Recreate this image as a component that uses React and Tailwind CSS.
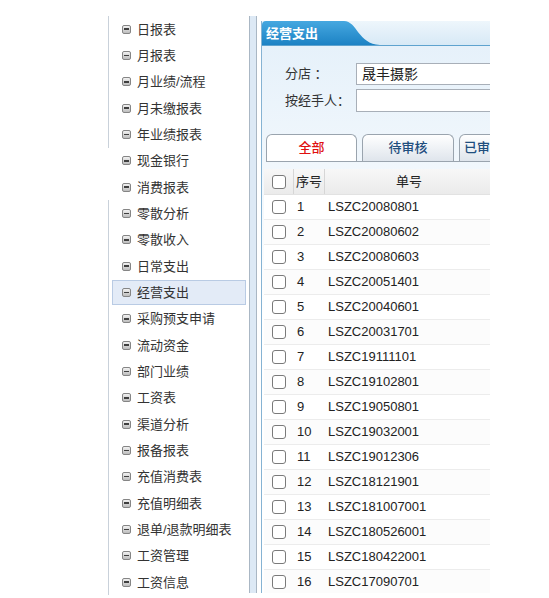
import React from "react";

const menu = [
  "日报表", "月报表", "月业绩/流程", "月未缴报表", "年业绩报表",
  "现金银行", "消费报表",
  "零散分析", "零散收入", "日常支出", "经营支出", "采购预支申请", "流动资金", "部门业绩", "工资表", "渠道分析", "报备报表", "充值消费表", "充值明细表", "退单/退款明细表", "工资管理", "工资信息",
];

const rows = [
  "LSZC20080801", "LSZC20080602", "LSZC20080603", "LSZC20051401", "LSZC20040601", "LSZC20031701",
  "LSZC19111101", "LSZC19102801", "LSZC19050801", "LSZC19032001", "LSZC19012306", "LSZC18121901",
  "LSZC181007001", "LSZC180526001", "LSZC180422001", "LSZC17090701",
];

const font = { fontFamily: '"Liberation Sans", "Noto Sans CJK SC", sans-serif' };

function MinusIcon() {
  return (
    <span className="flex h-[9px] w-[9px] shrink-0 items-center justify-center rounded-[2px] border border-[#858585] bg-gradient-to-b from-[#f2f2f2] to-[#bdbdbd]">
      <span className="h-[1.5px] w-[5px] bg-[#3f3f3f]" />
    </span>
  );
}

function MenuItem({ label, active }) {
  return (
    <div className="flex h-[26.33px] items-center px-[3px]">
      <div
        className={
          "flex h-[25px] w-full items-center gap-[6px] pl-[9px] " +
          (active ? "border border-[#b9cbe4] bg-[#e3ebf7]" : "border border-transparent")
        }
      >
        <MinusIcon />
        <span className="text-[13px] leading-none text-[#333333]">{label}</span>
      </div>
    </div>
  );
}

function Checkbox() {
  return <span className="block h-[14px] w-[14px] rounded-[3px] border border-[#7a7a7a] bg-white" />;
}

export default function App() {
  return (
    <div className="h-[598px] w-[549px] overflow-hidden bg-white" style={font}>
      <div className="flex h-[593px] pt-[16px]">
        {/* Sidebar */}
        <div className="ml-[108px] flex w-[141px] shrink-0 flex-col">
          <div className="border-l border-[#c9d1da]">
            {menu.slice(0, 5).map((m) => (
              <MenuItem key={m} label={m} />
            ))}
          </div>
          <div className="border-l border-transparent">
            {menu.slice(5, 7).map((m) => (
              <MenuItem key={m} label={m} />
            ))}
          </div>
          <div className="flex-1 border-l border-[#c9d1da]">
            {menu.slice(7).map((m) => (
              <MenuItem key={m} label={m} active={m === "经营支出"} />
            ))}
          </div>
        </div>

        {/* Splitter */}
        <div className="w-[8px] shrink-0 border-x border-[#aab7c4] bg-[#dde9f5]" />

        {/* Panel */}
        <div className="ml-[4px] mt-[5px] flex w-[229px] shrink-0 flex-col overflow-hidden border-l border-[#86b3d3]">
          {/* header strip */}
          <div className="relative flex h-[25px] shrink-0 items-end border-b border-[#5ea3cf] bg-gradient-to-b from-[#eef6fc] to-[#d7e9f6]">
            <svg width="118" height="24" viewBox="0 0 118 24" className="absolute left-0 top-0">
              <defs>
                <linearGradient id="tabg" x1="0" y1="0" x2="0" y2="1">
                  <stop offset="0" stopColor="#46a8e0" />
                  <stop offset="1" stopColor="#1c82c4" />
                </linearGradient>
              </defs>
              <path d="M0 4 Q0 0 4 0 L82 0 C95 0 96 23 118 24 L0 24 Z" fill="url(#tabg)" />
            </svg>
            <span className="relative ml-[4px] flex h-[24px] items-center text-[13px] font-bold leading-none text-white">
              经营支出
            </span>
          </div>

          {/* content */}
          <div className="flex-1 bg-gradient-to-b from-[#e6f1fa] via-white to-white to-[30%]">
            <div className="flex w-[320px] flex-col gap-[4px] pl-[23px] pt-[17px]">
              <div className="flex items-center">
                <span className="w-[71px] text-[13px] text-[#333333]">分店 ：</span>
                <div className="flex h-[22px] w-[220px] items-center border border-[#a8afb8] bg-white pl-[5px] text-[14px] text-[#222222]">
                  晟丰摄影
                </div>
              </div>
              <div className="flex items-center">
                <span className="w-[71px] text-[13px] text-[#333333]">按经手人：</span>
                <div className="h-[23px] w-[220px] border border-[#a8afb8] bg-white" />
              </div>
            </div>

            {/* tabs */}
            <div className="ml-[4px] mt-[22px] flex w-[320px] gap-[5px] border-b border-[#9aa4ae]">
              <div className="flex h-[27px] w-[91px] items-center justify-center rounded-t-[6px] border border-b-0 border-[#9aa4ae] bg-white text-[13px] font-medium text-[#e01010]">
                全部
              </div>
              <div className="flex h-[27px] w-[92px] items-center justify-center rounded-t-[6px] border border-b-0 border-[#9aa4ae] bg-gradient-to-b from-[#ffffff] to-[#dfe5ec] text-[13px] font-medium text-[#1f4e7e]">
                待审核
              </div>
              <div className="flex h-[27px] w-[92px] items-center rounded-t-[6px] border border-b-0 border-[#9aa4ae] bg-gradient-to-b from-[#ffffff] to-[#dfe5ec] pl-[4px] text-[13px] font-medium text-[#1f4e7e]">
                已审
              </div>
            </div>

            {/* table */}
            <div className="ml-[2px] mt-[7px] w-[400px]">
              <div className="flex h-[26px] items-center border-b border-[#e2e2e2] bg-gradient-to-b from-[#f7f7f7] to-[#ebebeb] text-[13px] text-[#222222]">
                <div className="flex h-full w-[30px] items-center justify-center border-r border-[#d6d6d6]">
                  <Checkbox />
                </div>
                <div className="flex h-full w-[31px] items-center border-r border-[#d6d6d6] pl-[2px]">序号</div>
                <div className="flex h-full w-[168px] items-center justify-center">单号</div>
              </div>
              {rows.map((r, i) => (
                <div
                  key={r}
                  className={
                    "flex h-[25px] items-center border-b border-[#ececec] text-[13px] text-[#222222] " +
                    (i % 2 === 1 ? "bg-[#fcfcfc]" : "bg-white")
                  }
                >
                  <div className="flex w-[30px] items-center justify-center">
                    <Checkbox />
                  </div>
                  <div className="w-[31px] pl-[3px]">{i + 1}</div>
                  <div className="pl-[3px]">{r}</div>
                </div>
              ))}
            </div>
          </div>
        </div>
      </div>
    </div>
  );
}
